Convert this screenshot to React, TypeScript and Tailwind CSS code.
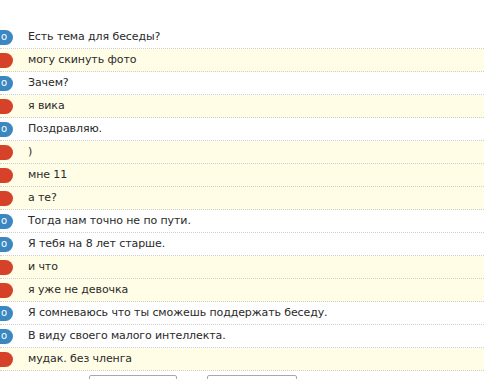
const MESSAGES: { me: boolean; text: string }[] = [
  { me: true, text: 'Есть тема для беседы?' },
  { me: false, text: 'могу скинуть фото' },
  { me: true, text: 'Зачем?' },
  { me: false, text: 'я вика' },
  { me: true, text: 'Поздравляю.' },
  { me: false, text: ')' },
  { me: false, text: 'мне 11' },
  { me: false, text: 'а те?' },
  { me: true, text: 'Тогда нам точно не по пути.' },
  { me: true, text: 'Я тебя на 8 лет старше.' },
  { me: false, text: 'и что' },
  { me: false, text: 'я уже не девочка' },
  { me: true, text: 'Я сомневаюсь что ты сможешь поддержать беседу.' },
  { me: true, text: 'В виду своего малого интеллекта.' },
  { me: false, text: 'мудак. без членга' },
];

export default function App() {
  return (
    <div className="w-[484px] h-[379px] overflow-hidden bg-white pt-[26px] text-[#2a2a2a] text-[11px] font-['Tahoma','DejaVu_Sans',sans-serif]">
      <div className="flex flex-col">
        {MESSAGES.map((m, i) => (
          <div
            key={i}
            className={`h-[23px] flex items-center border-b border-dotted border-[#cfcfcf] ${m.me ? 'bg-white' : 'bg-[#fffde6]'}`}
          >
            <div
              className={`w-[13px] h-[15px] rounded-r-full flex items-center justify-end pr-[6px] text-white text-[10px] leading-none overflow-hidden ${m.me ? 'bg-[#3b87c1]' : 'bg-[#d6412a]'}`}
            >
              {m.me ? 'о' : ''}
            </div>
            <span className="ml-[15px] whitespace-nowrap tracking-[-0.1px]">{m.text}</span>
          </div>
        ))}
      </div>
      <div className="flex mt-[4px]">
        <div className="ml-[89px] w-[88px] h-[12px] border border-[#a9a9a9] rounded-t-[2px] bg-white" />
        <div className="ml-[30px] w-[90px] h-[12px] border border-[#a9a9a9] rounded-t-[2px] bg-white" />
      </div>
    </div>
  );
}
